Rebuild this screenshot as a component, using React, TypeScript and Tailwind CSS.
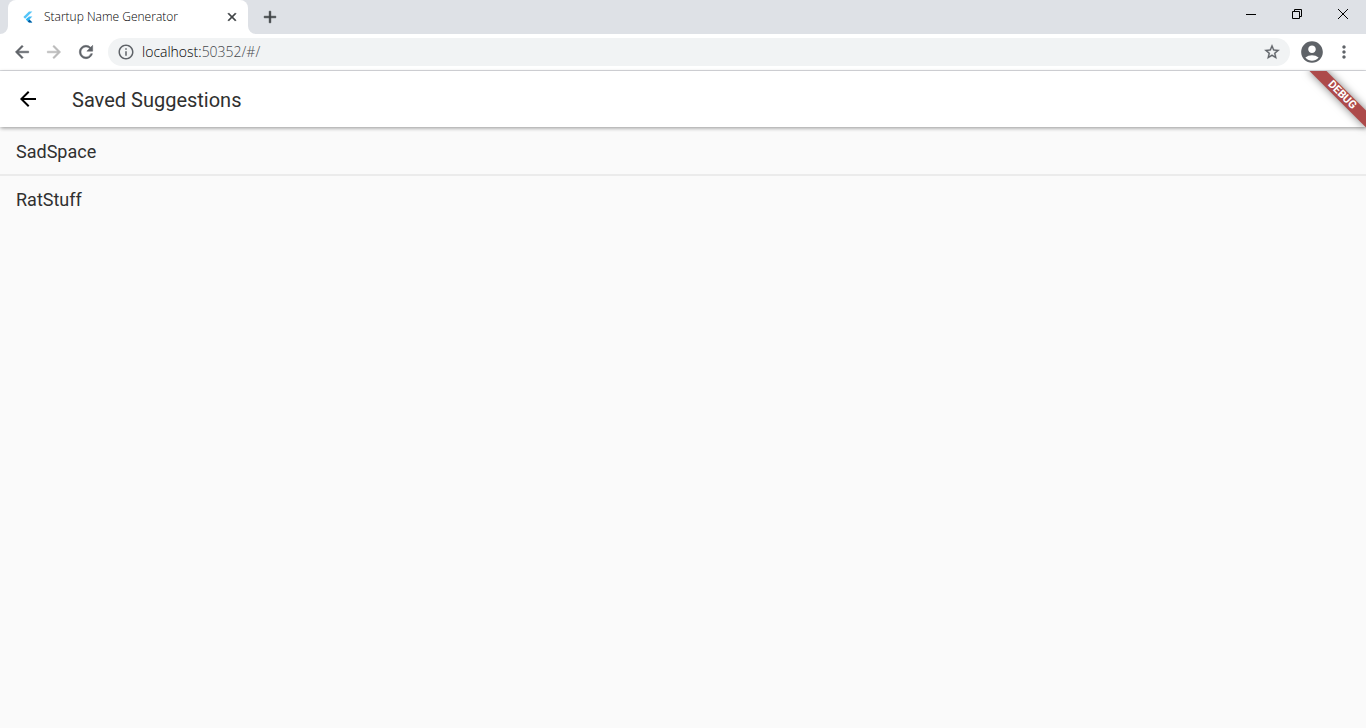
import {
	MdAccountCircle,
	MdAdd,
	MdArrowBack,
	MdArrowForward,
	MdClose,
	MdInfoOutline,
	MdMoreVert,
	MdRefresh,
	MdStarBorder,
} from "react-icons/md";

const suggestions: string[] = ["SadSpace", "RatStuff"];

function FlutterLogo() {
	return (
		<svg width="16" height="16" viewBox="-0.8 -0.8 18 18" aria-hidden="true">
			<path d="M9.3 2 3 8.2 5 10.2 13.1 2z" fill="#54c5f8" />
			<path d="M9.3 7.6 5.9 11 9.3 14.4H13.1L9.8 11 13.1 7.6z" fill="#40b8f5" />
			<path d="M7.8 12.9 9.3 14.4H13.1L9.8 11z" fill="#01579b" />
			<path d="M5.9 11 7.8 9.1 9.8 11 7.8 12.9z" fill="#29b6f6" />
		</svg>
	);
}

function TabFoot({ flip }: { flip?: boolean }) {
	return (
		<svg
			width="8"
			height="8"
			viewBox="0 0 8 8"
			className={flip ? "-scale-x-100 self-end" : "self-end"}
			aria-hidden="true"
		>
			<path d="M8 0v8H0a8 8 0 0 0 8-8z" fill="#fff" />
		</svg>
	);
}

function TabStrip() {
	return (
		<div className="flex h-[34px] bg-[#dee1e6] [&_path[fill=none]]:hidden">
			<TabFoot />
			<div className="flex w-60 items-center rounded-t-lg bg-white pr-2 pl-3">
				<FlutterLogo />
				<span className="ml-2 flex-1 truncate font-['Open_Sans',sans-serif] text-xs font-light text-black">
					Startup Name Generator
				</span>
				<button aria-label="Close tab" className="flex size-4 items-center justify-center text-[#3c4043]">
					<MdClose size={14} strokeWidth={1} />
				</button>
			</div>
			<TabFoot flip />
			<button aria-label="New tab" className="ml-1 flex items-center text-[#3c4043]">
				<MdAdd size={20} strokeWidth={0.6} />
			</button>
			<div className="ml-auto flex h-7 text-black">
				<button aria-label="Minimize" className="flex w-[46px] items-center justify-center">
					<svg width="10" height="10" viewBox="0 0 10 10">
						<path d="M0 5.5h10" stroke="currentColor" />
					</svg>
				</button>
				<button aria-label="Restore" className="flex w-[46px] items-center justify-center">
					<svg width="10" height="10" viewBox="0 0 10 10" fill="none" stroke="currentColor">
						<path d="M.5 2.5h7v7h-7zM2.5 2.5v-2h7v7h-2" />
					</svg>
				</button>
				<button aria-label="Close" className="flex w-[46px] items-center justify-center">
					<svg width="10" height="10" viewBox="0 0 10 10" fill="none" stroke="currentColor">
						<path d="M0 0l10 10M10 0L0 10" />
					</svg>
				</button>
			</div>
		</div>
	);
}

function Toolbar() {
	return (
		<div className="flex h-[37px] items-center border-b border-[#dadce0] bg-white px-3 text-[#5f6368] [&_path[fill=none]]:hidden">
			<button aria-label="Back">
				<MdArrowBack size={20} strokeWidth={0.6} />
			</button>
			<button aria-label="Forward" className="ml-3 text-[#bababa]" disabled>
				<MdArrowForward size={20} strokeWidth={0.6} />
			</button>
			<button aria-label="Reload" className="ml-3">
				<MdRefresh size={20} strokeWidth={0.6} />
			</button>
			<div className="ml-3 flex h-7 flex-1 items-center rounded-full bg-[#f1f3f4] px-[9px] font-['Open_Sans',sans-serif] text-sm font-light">
				<MdInfoOutline size={18} />
				<div className="ml-[7px] flex-1 text-[#45484c]">
					<span className="text-black">localhost:</span>50352/#/
				</div>
				<button aria-label="Bookmark this page">
					<MdStarBorder size={18} strokeWidth={0.4} />
				</button>
			</div>
			<button aria-label="Profile" className="ml-[9px]">
				<MdAccountCircle size={26} />
			</button>
			<button aria-label="Menu" className="ml-[9px]">
				<MdMoreVert size={20} />
			</button>
		</div>
	);
}

function DebugBanner() {
	return (
		<div className="pointer-events-none absolute top-0 right-0 size-20 overflow-hidden">
			<div className="absolute top-[18px] right-[-16px] h-3 w-20 rotate-45 bg-[#ad4a4a] text-center font-[Roboto,sans-serif] text-[11px] leading-3 font-bold text-white shadow-[0_0_8px_rgba(0,0,0,0.5)]">
				DEBUG
			</div>
		</div>
	);
}

export default function App() {
	return (
		<div className="flex min-h-screen flex-col bg-[#fafafa]">
			<TabStrip />
			<Toolbar />
			<main className="relative flex-1 font-[Roboto,sans-serif] text-[#303030]">
				<header className="relative flex h-14 items-center bg-white px-4 shadow-[0_2px_4px_-1px_rgba(0,0,0,0.2),0_1px_4px_rgba(0,0,0,0.24)]">
					<button aria-label="Go back" className="flex size-6 items-center justify-center text-black">
						<MdArrowBack size={24} />
					</button>
					<h1 className="ml-8 pt-0.5 text-xl">Saved Suggestions</h1>
				</header>
				<ul className="pt-px text-lg">
					{suggestions.map((name) => (
						<li
							key={name}
							className="flex h-12 items-center border-b-2 border-[#ebebeb] px-4 pt-0.5 last:border-transparent"
						>
							{name}
						</li>
					))}
				</ul>
				<DebugBanner />
			</main>
		</div>
	);
}
